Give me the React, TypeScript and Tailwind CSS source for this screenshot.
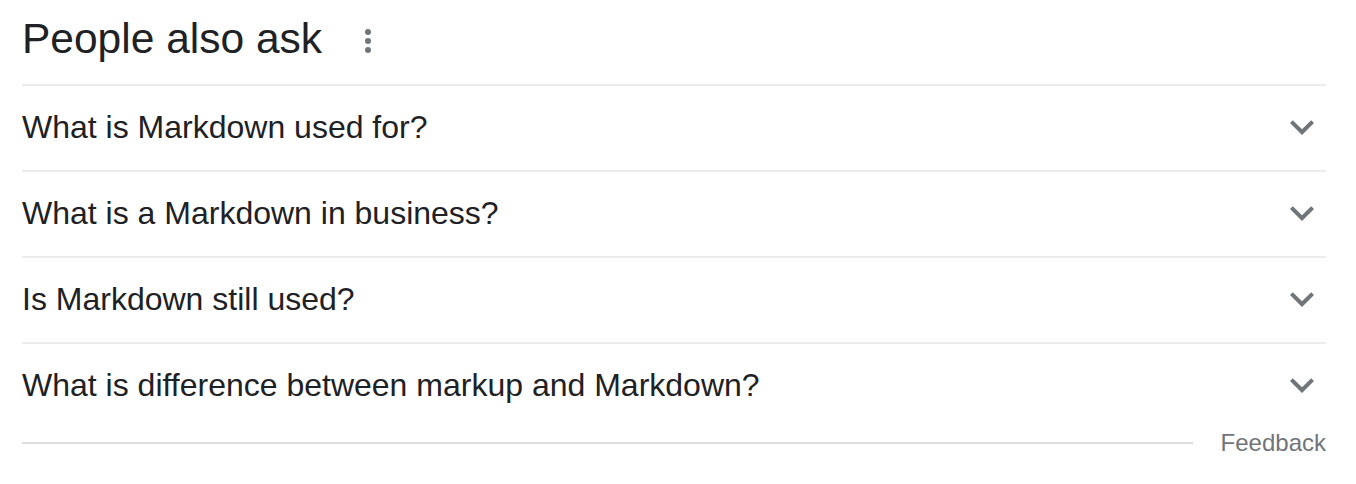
const questions = [
  "What is Markdown used for?",
  "What is a Markdown in business?",
  "Is Markdown still used?",
  "What is difference between markup and Markdown?",
];

function Chevron() {
  return (
    <svg viewBox="0 0 24 24" className="w-12 h-12 fill-[#70757a]">
      <path d="M16.59 8.59L12 13.17 7.41 8.59 6 10l6 6 6-6z" />
    </svg>
  );
}

function MoreVert() {
  return (
    <svg viewBox="0 0 24 24" className="w-9 h-9 fill-[#70757a]">
      <circle cx="12" cy="6" r="2" />
      <circle cx="12" cy="12" r="2" />
      <circle cx="12" cy="18" r="2" />
    </svg>
  );
}

export default function App() {
  return (
    <main className="bg-white min-h-screen w-full font-['Liberation_Sans',Arial,sans-serif] text-[#202124]">
      <div className="ml-[22px] w-[1304px]">
        <div className="h-[84px] flex items-center pb-[6px]">
          <h2 className="text-[42.5px] leading-none">People also ask</h2>
          <button className="ml-[28px] mt-[4px]">
            <MoreVert />
          </button>
        </div>
        <ul>
          {questions.map((q) => (
            <li
              key={q}
              className="border-t-2 border-[#ebebeb] h-[86px] flex items-center justify-between pb-[2px]"
            >
              <span className="text-[32px] leading-none">{q}</span>
              <Chevron />
            </li>
          ))}
        </ul>
        <div className="flex items-center mt-[3px]">
          <div className="flex-1 h-[2px] bg-[#dadce0]" />
          <span className="ml-[28px] text-[24px] text-[#70757a] leading-none">
            Feedback
          </span>
        </div>
      </div>
    </main>
  );
}
